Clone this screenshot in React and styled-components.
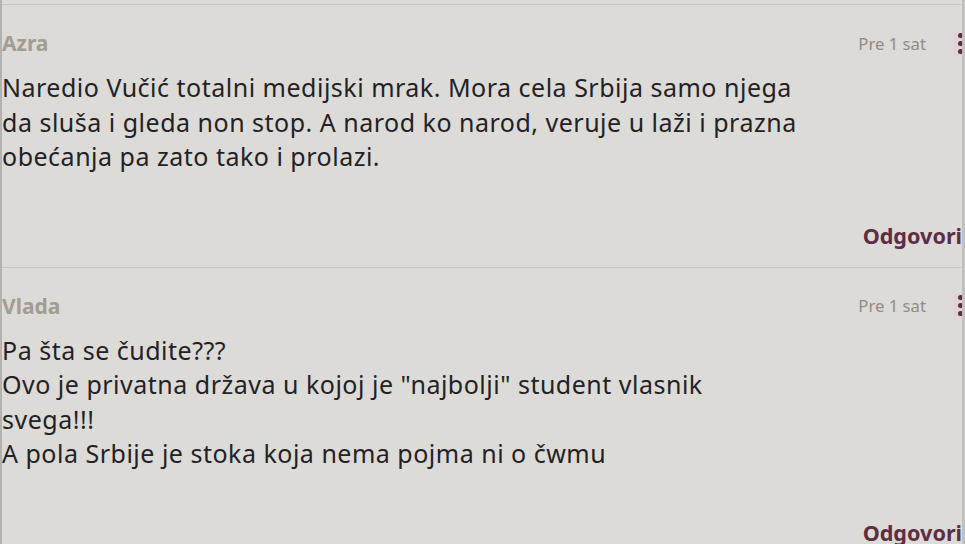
import React from "react";
import styled, { createGlobalStyle } from "styled-components";

const GlobalStyle = createGlobalStyle`
  html, body {
    margin: 0;
    padding: 0;
    background: #dddbd7;
  }
  body {
    font-family: "Noto Sans", "Open Sans", sans-serif;
    color: #222226;
  }
`;

const Page = styled.div`
  width: 965px;
  height: 544px;
  box-sizing: border-box;
  padding-top: 4px;
  border-left: 2px solid #b4b2ae;
  border-right: 3px solid #c3c1bd;
  overflow: hidden;
`;

const CommentItem = styled.article`
  border-top: 1px solid #c6c4c0;
  padding: 24px 0 17px 0;
`;

const Header = styled.header`
  display: flex;
  align-items: center;
  height: 28px;
`;

const Author = styled.span`
  flex: 1;
  font-size: 21px;
  font-weight: 700;
  color: #a29c93;
`;

const Time = styled.span`
  font-size: 16.7px;
  color: #8f8b86;
`;

const MenuButton = styled.button`
  display: flex;
  flex-direction: column;
  align-items: center;
  gap: 3px;
  width: 12px;
  margin-left: 28px;
  margin-right: -4px;
  padding: 2px 0;
  border: 0;
  border-radius: 2px;
  background: #e3d3d6;
  cursor: pointer;
`;

const Dot = styled.span`
  width: 5px;
  height: 5px;
  border-radius: 50%;
  background: #5a2a40;
`;

const Body = styled.p`
  margin: 13px 0 0 0;
  max-width: 797px;
  font-size: 25px;
  letter-spacing: 0.5px;
  line-height: 34.5px;
  white-space: pre-line;
`;

const Footer = styled.footer`
  display: flex;
  justify-content: flex-end;
  height: 28px;
  margin-top: 48px;
`;

const ReplyLink = styled.a`
  font-size: 21.6px;
  font-weight: 700;
  color: #5e2d45;
  line-height: 28px;
  cursor: pointer;
`;

const comments = [
  {
    author: "Azra",
    time: "Pre 1 sat",
    text:
      "Naredio Vučić totalni medijski mrak. Mora cela Srbija samo njega da sluša i gleda non stop. A narod ko narod, veruje u laži i prazna obećanja pa zato tako i prolazi.",
  },
  {
    author: "Vlada",
    time: "Pre 1 sat",
    text:
      'Pa šta se čudite???\nOvo je privatna država u kojoj je "najbolji" student vlasnik svega!!!\nA pola Srbije je stoka koja nema pojma ni o čwmu',
  },
];

const Comment = ({ author, time, text }) => (
  <CommentItem>
    <Header>
      <Author>{author}</Author>
      <Time>{time}</Time>
      <MenuButton aria-label="Opcije">
        <Dot />
        <Dot />
        <Dot />
      </MenuButton>
    </Header>
    <Body>{text}</Body>
    <Footer>
      <ReplyLink>Odgovori</ReplyLink>
    </Footer>
  </CommentItem>
);

const App = () => (
  <>
    <GlobalStyle />
    <Page>
      {comments.map((c) => (
        <Comment key={c.author} {...c} />
      ))}
    </Page>
  </>
);

export default App;
